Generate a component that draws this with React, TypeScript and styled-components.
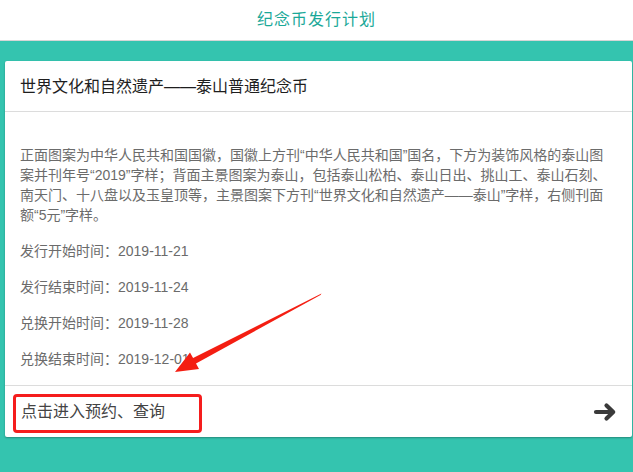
import React from "react";
import styled, { createGlobalStyle } from "styled-components";

const Global = createGlobalStyle`
  html, body {
    margin: 0;
    padding: 0;
    background: #34c4af;
    font-family: "Liberation Sans", "Noto Sans CJK SC", sans-serif;
  }
  body { min-height: 472px; }
  * { box-sizing: border-box; }
`;

const Page = styled.div`
  position: relative;
  width: 633px;
  min-height: 472px;
  background: #34c4af;
`;

const Header = styled.header`
  height: 41px;
  background: #fff;
  border-bottom: 1px solid #d6d6d6;
  display: flex;
  align-items: center;
  justify-content: center;
  padding-bottom: 4px;
  color: #1aa898;
  font-size: 16px;
  letter-spacing: 1px;
`;

const Card = styled.section`
  margin: 20px 1px 0 5px;
  background: #fff;
  border-radius: 2px;
  box-shadow: 0 1px 2px rgba(0, 0, 0, 0.3);
`;

const CardHeader = styled.div`
  height: 51px;
  padding: 0 15px;
  display: flex;
  align-items: center;
  padding-bottom: 2px;
  border-bottom: 1px solid #dcdcdc;
  color: #1e1e1e;
  font-size: 16px;
`;

const CardContent = styled.div`
  padding: 33px 15px 16px 15px;
  color: #6b6b6b;
  font-size: 14px;
`;

const Desc = styled.p`
  margin: 0;
  line-height: 20px;
`;

const InfoRow = styled.p`
  margin: 16px 0 0 0;
  line-height: 20px;
`;

const CardFooter = styled.div`
  position: relative;
  height: 52px;
  border-top: 1px solid #dcdcdc;
  padding: 0 15px 0 16px;
  display: flex;
  align-items: center;
  justify-content: space-between;
  color: #444;
  font-size: 16px;
`;

const FooterLabel = styled.span`
  line-height: 20px;
`;

const ArrowSvg = styled.svg`
  width: 24px;
  height: 20px;
  color: #3a3a3a;
`;

const HighlightBox = styled.div`
  position: absolute;
  left: 8px;
  top: 8px;
  width: 189px;
  height: 39px;
  border: 3px solid #f51d1d;
  border-radius: 4px;
  pointer-events: none;
`;

const Annotation = styled.svg`
  position: absolute;
  left: 0;
  top: 0;
  width: 633px;
  height: 472px;
  pointer-events: none;
`;

const dates = [
  ["发行开始时间", "2019-11-21"],
  ["发行结束时间", "2019-11-24"],
  ["兑换开始时间", "2019-11-28"],
  ["兑换结束时间", "2019-12-01"],
];

function ArrowRight() {
  return (
    <ArrowSvg viewBox="0 0 24 20" fill="none">
      <path
        d="M3 10 H20 M13.5 3.5 L20.2 10 L13.5 16.5"
        stroke="currentColor"
        strokeWidth="4.2"
        strokeLinecap="round"
        strokeLinejoin="round"
      />
    </ArrowSvg>
  );
}

export default function App() {
  return (
    <Page>
      <Global />
      <Header>纪念币发行计划</Header>
      <Card>
        <CardHeader>世界文化和自然遗产——泰山普通纪念币</CardHeader>
        <CardContent>
          <Desc>
            正面图案为中华人民共和国国徽，国徽上方刊“中华人民共和国”国名，下方为装饰风格的泰山图案并刊年号“2019”字样；背面主景图案为泰山，包括泰山松柏、泰山日出、挑山工、泰山石刻、南天门、十八盘以及玉皇顶等，主景图案下方刊“世界文化和自然遗产——泰山”字样，右侧刊面额“5元”字样。
          </Desc>
          {dates.map(([k, v]) => (
            <InfoRow key={k}>
              {k}：{v}
            </InfoRow>
          ))}
        </CardContent>
        <CardFooter>
          <FooterLabel>点击进入预约、查询</FooterLabel>
          <ArrowRight />
          <HighlightBox />
        </CardFooter>
      </Card>
      <Annotation viewBox="0 0 633 472">
        <polygon
          fill="#f41e12"
          points="321.5,293.5 320.5,295 196,363.4 199,369 175,372 190,352.5 193.1,358"
        />
      </Annotation>
    </Page>
  );
}
